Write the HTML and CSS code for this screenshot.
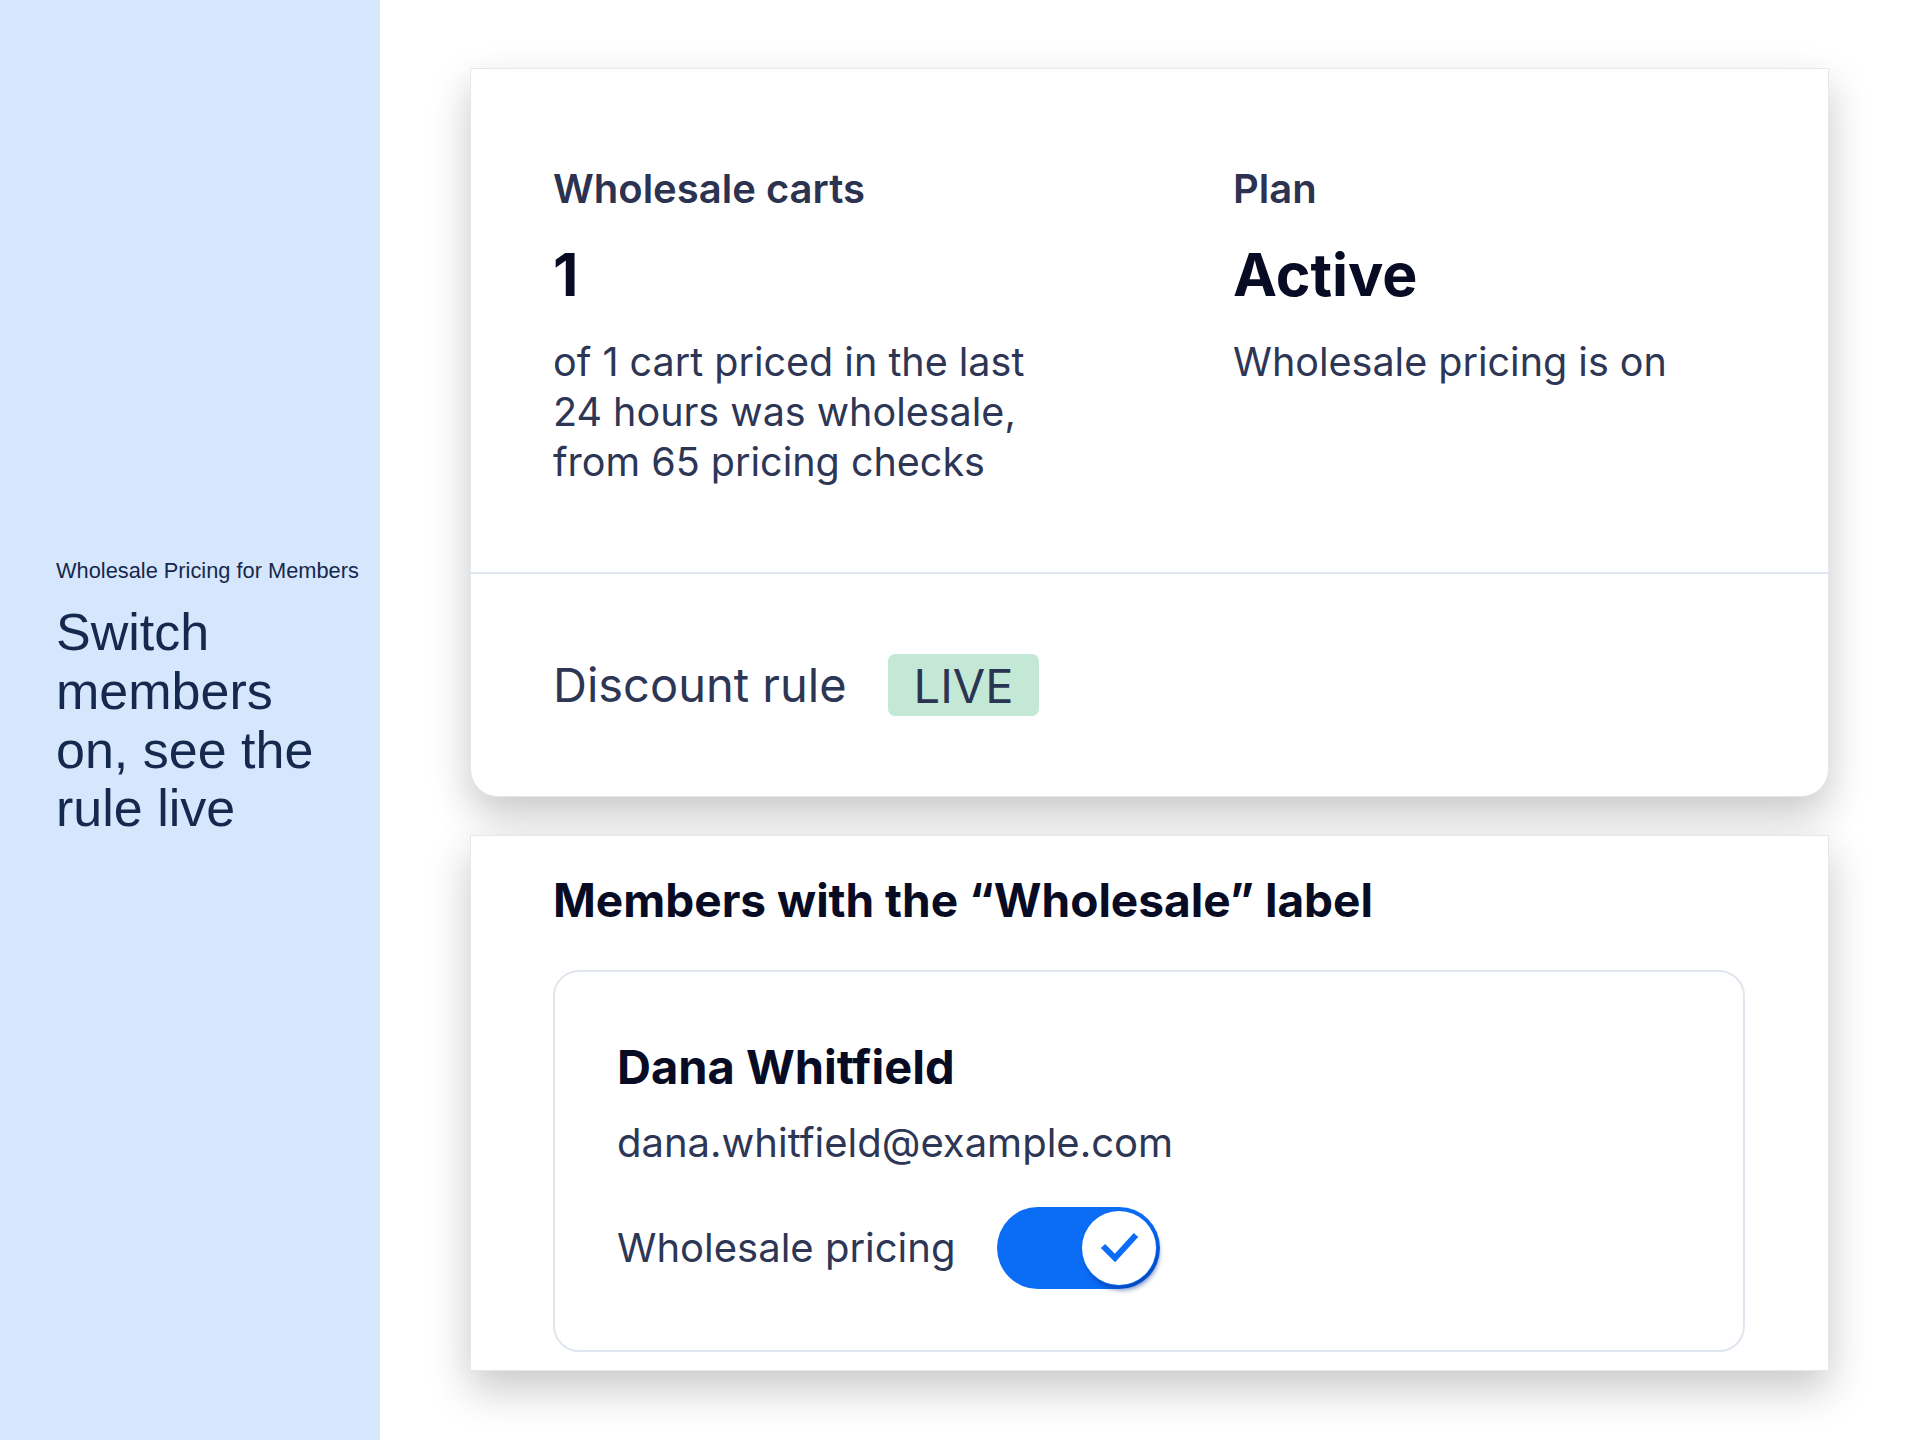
FILE: index.html
```html
<!DOCTYPE html>
<html lang="en">
<head>
<meta charset="utf-8">
<title>Wholesale Pricing for Members</title>
<link rel="stylesheet" href="styles.css">
</head>
<body>
<div class="page">
  <aside class="side">
    <p class="eyebrow">Wholesale Pricing for Members</p>
    <h1 class="side-title">Switch members on, see the rule live</h1>
  </aside>
  <main class="main">
    <section class="card card-stats">
      <div class="stats">
        <div class="stat">
          <div class="stat-label">Wholesale carts</div>
          <div class="stat-value">1</div>
          <div class="stat-desc">of 1 cart priced in the last 24 hours was wholesale, from 65 pricing checks</div>
        </div>
        <div class="stat">
          <div class="stat-label">Plan</div>
          <div class="stat-value">Active</div>
          <div class="stat-desc">Wholesale pricing is on</div>
        </div>
      </div>
      <div class="rule-row">
        <span class="rule-label">Discount rule</span>
        <span class="badge">LIVE</span>
      </div>
    </section>
    <section class="card card-members">
      <h2 class="members-title">Members with the “Wholesale” label</h2>
      <div class="member">
        <div class="member-name">Dana Whitfield</div>
        <div class="member-email">dana.whitfield@example.com</div>
        <div class="toggle-row">
          <span class="toggle-label">Wholesale pricing</span>
          <span class="switch">
            <span class="knob">
              <svg width="74" height="74" viewBox="0 0 74 74"><polyline points="21,35 33,47 54,24" fill="none" stroke="#0b6cf5" stroke-width="6"/></svg>
            </span>
          </span>
        </div>
      </div>
    </section>
  </main>
</div>
</body>
</html>
```
FILE: styles.css
```css
html, body { margin: 0; padding: 0; }
body { font-family: Inter, "Noto Sans", sans-serif; background: #fff; }
.page { display: flex; min-height: 1440px; }
.side {
  width: 380px; flex: none; box-sizing: border-box;
  background: #d6e6fd; color: #15284d;
  display: flex; flex-direction: column; justify-content: center;
  padding: 0 14px 44px 56px;
  font-family: "Liberation Sans", Arial, sans-serif;
}
.eyebrow { margin: 0 0 20px; font-size: 21.8px; line-height: 1.15; white-space: nowrap; }
.side-title { margin: 0; max-width: 295px; font-size: 52px; font-weight: 400; line-height: 58.6px; }
.main { flex: 1; padding: 68px 91px 0 90px; display: flex; flex-direction: column; gap: 38px; }
.card { background: #fff; border: 1px solid #e3e8ef; box-shadow: 0 18px 40px rgba(0,0,0,0.22); }
.card-stats { border-radius: 0 0 28px 28px; }
.stats {
  display: grid; grid-template-columns: 500px 1fr; column-gap: 180px;
  padding: 96px 82px 85px; border-bottom: 2px solid #dfe6ef;
}
.stat-label { font-size: 40px; font-weight: 600; color: #2b3350; line-height: 1.2; }
.stat-value { font-size: 59px; font-weight: 700; color: #070b24; line-height: 1.2; margin-top: 27px; }
.stat-desc { font-size: 39.5px; line-height: 50px; color: #2d3655; margin-top: 26.5px; }
.rule-row { display: flex; align-items: center; gap: 41px; padding: 80px 82px; }
.rule-label { font-size: 47px; color: #2d3655; line-height: 1.2; }
.badge {
  background: #c4e8d6; border-radius: 7px; height: 62px; padding: 0 26px;
  display: flex; align-items: center; font-size: 47px; color: #2b3552;
}
.card-members { padding: 37px 83px 18px 82px; }
.members-title { margin: 0 0 42px; font-size: 46px; font-weight: 700; color: #070b24; line-height: 1.2; }
.member { border: 2px solid #dfe6ee; border-radius: 26px; padding: 67px 62px 61px; }
.member-name { font-size: 47px; font-weight: 700; color: #070b24; line-height: 1.2; }
.member-email { font-size: 40px; color: #2d3655; line-height: 1.2; margin-top: 23px; }
.toggle-row { display: flex; align-items: center; gap: 42px; margin-top: 40px; }
.toggle-label { font-size: 40px; color: #2d3655; line-height: 1.2; }
.switch { position: relative; width: 163px; height: 82px; border-radius: 41px; background: #0b6cf5; flex: none; }
.knob {
  position: absolute; right: 4px; top: 4px; width: 74px; height: 74px; border-radius: 50%;
  background: #fff; box-shadow: 0 0 0 1px #0b6cf5, 3px 5px 5px rgba(0,40,140,0.55);
  display: flex; align-items: center; justify-content: center;
}
.knob svg { display: block; }
```
